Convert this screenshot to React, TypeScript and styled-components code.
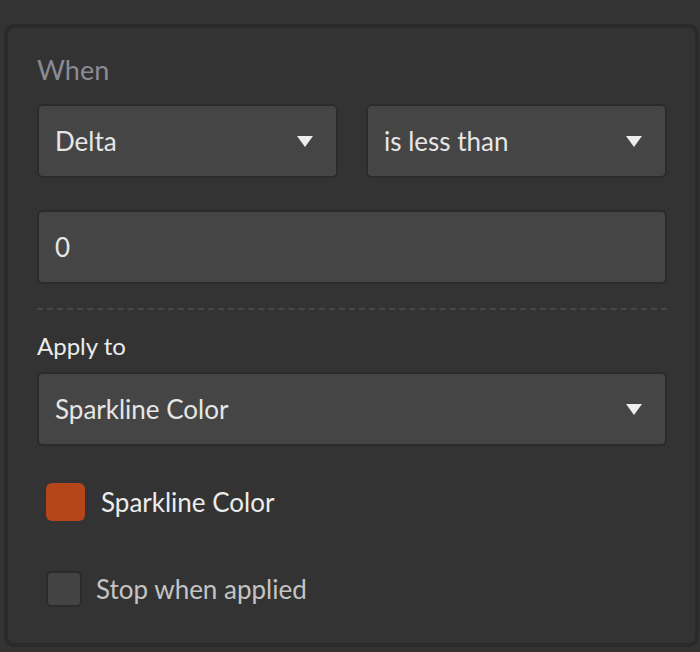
import styled, { createGlobalStyle } from "styled-components";

const GlobalStyle = createGlobalStyle`
  html, body {
    margin: 0;
    padding: 0;
    background: #333333;
  }
  body {
    font-family: Lato, "Open Sans", "Noto Sans", sans-serif;
  }
`;

const Page = styled.div`
  height: 652px;
  padding: 24px 1px 0 4px;
  box-sizing: border-box;
`;

const Panel = styled.section`
  height: 623px;
  box-sizing: border-box;
  border: 4px solid #2a2a2a;
  border-radius: 10px;
  background: #333333;
  padding: 26px 28px 0 29px;
  display: flex;
  flex-direction: column;
`;

const SectionLabel = styled.div<{ $muted?: boolean }>`
  font-size: ${(p) => (p.$muted ? "27px" : "24px")};
  line-height: 32px;
  color: ${(p) => (p.$muted ? "#8b8b94" : "#ececec")};
`;

const Row = styled.div<{ $top: number }>`
  display: flex;
  gap: 28px;
  margin-top: ${(p) => p.$top}px;
`;

const Field = styled.div`
  flex: 1;
  height: 74px;
  box-sizing: border-box;
  border: 2px solid #2b2b2b;
  border-radius: 6px;
  background: #454545;
  display: flex;
  align-items: center;
  justify-content: space-between;
  padding: 0 23px 0 16px;
  font-size: 26px;
  color: #e6e6e6;
`;

const Caret = styled.span`
  width: 0;
  height: 0;
  border-left: 8px solid transparent;
  border-right: 8px solid transparent;
  border-top: 11px solid #ededed;
`;

const Divider = styled.hr`
  margin: 24px 0 20px;
  border: 0;
  border-top: 2px dashed #474747;
  height: 0;
`;

const OptionRow = styled.label<{ $dim?: boolean; $top: number }>`
  display: flex;
  align-items: center;
  gap: 14px;
  margin-top: ${(p) => p.$top}px;
  font-size: 26px;
  color: ${(p) => (p.$dim ? "#c4c4c4" : "#ececec")};
`;

const Swatch = styled.span<{ $color: string }>`
  width: 39px;
  height: 38px;
  margin-left: 9px;
  margin-right: 2px;
  border-radius: 6px;
  background: ${(p) => p.$color};
`;

const Box = styled.span`
  width: 36px;
  height: 36px;
  margin-left: 9px;
  box-sizing: border-box;
  border: 2px solid #2b2b2b;
  border-radius: 5px;
  background: #434343;
`;

const Select = ({ value }: { value: string }) => (
  <Field>
    <span>{value}</span>
    <Caret />
  </Field>
);

export default function App() {
  return (
    <>
      <GlobalStyle />
      <Page>
        <Panel>
          <SectionLabel $muted>When</SectionLabel>
          <Row $top={18}>
            <Select value="Delta" />
            <Select value="is less than" />
          </Row>
          <Row $top={32}>
            <Field>0</Field>
          </Row>
          <Divider />
          <SectionLabel>Apply to</SectionLabel>
          <Row $top={10}>
            <Select value="Sparkline Color" />
          </Row>
          <OptionRow $top={37}>
            <Swatch $color="#b5461c" />
            Sparkline Color
          </OptionRow>
          <OptionRow $dim $top={50}>
            <Box />
            Stop when applied
          </OptionRow>
        </Panel>
      </Page>
    </>
  );
}
